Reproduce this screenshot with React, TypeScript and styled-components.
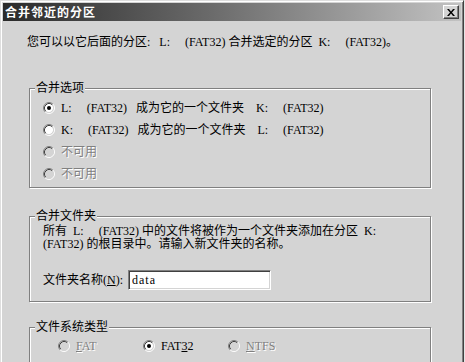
import React from 'react';
import styled, { createGlobalStyle } from 'styled-components';

const GlobalStyle = createGlobalStyle`
  html, body {
    margin: 0;
    padding: 0;
    overflow: hidden;
    background: #e4e4e4;
  }
  body {
    font-family: "Liberation Serif", "Noto Sans CJK SC", serif;
    font-size: 12px;
    color: #000;
  }
`;

const Window = styled.div`
  width: 464px;
  height: 362px;
  box-sizing: border-box;
  background: #d4d4d4;
  border: 1px solid;
  border-bottom: none;
  border-color: #dedede #404040 #404040 #dedede;
  box-shadow: inset 1px 1px 0 #fff, inset -1px 0 0 #808080;
  padding: 2px 2px 0 2px;
  display: flex;
  flex-direction: column;
  overflow: hidden;
`;

const TitleBar = styled.div`
  height: 18px;
  flex: none;
  display: flex;
  align-items: center;
  justify-content: space-between;
  padding: 0 2px;
  background: linear-gradient(to right, #2a2a2a 0%, #6a6a6a 45%, #c2c2c2 100%);
`;

const Title = styled.span`
  color: #fff;
  font-family: "Noto Sans CJK SC", sans-serif;
  font-weight: 700;
  font-size: 12px;
  letter-spacing: 1px;
  line-height: 18px;
`;

const CloseButton = styled.button`
  width: 16px;
  height: 14px;
  padding: 0;
  box-sizing: border-box;
  background: #d4d4d4;
  border: 1px solid;
  border-color: #fff #404040 #404040 #fff;
  box-shadow: inset -1px -1px 0 #808080;
  display: flex;
  align-items: center;
  justify-content: center;
`;

const Content = styled.div`
  padding: 13px 0 0 24px;
  display: flex;
  flex-direction: column;
`;

const Intro = styled.p`
  margin: 0;
  line-height: 16px;
  white-space: pre;
`;

const Group = styled.fieldset<{ $mt: number }>`
  margin: ${(p) => p.$mt}px 0 0 2px;
  width: 402px;
  min-width: 0;
  box-sizing: border-box;
  border: 1px solid #808080;
  box-shadow: 1px 1px 0 #fff, inset 1px 1px 0 #fff;
  padding: 0;
  flex: none;
`;

const Legend = styled.legend`
  margin-left: 5px;
  padding: 0 1px;
  line-height: 16px;
  background: #d4d4d4;
`;

const GroupBody = styled.div<{ $pt: number; $pb: number; $pl: number }>`
  padding: ${(p) => p.$pt}px 0 ${(p) => p.$pb}px ${(p) => p.$pl}px;
  display: flex;
  flex-direction: column;
`;

const OptionRow = styled.div`
  display: flex;
  align-items: center;
  height: 22px;
  gap: 6px;
`;

const OptionLabel = styled.span<{ $disabled?: boolean }>`
  white-space: pre;
  line-height: 16px;
  color: ${(p) => (p.$disabled ? '#808080' : '#000')};
  text-shadow: ${(p) => (p.$disabled ? '1px 1px 0 #fff' : 'none')};
`;

const Paragraph = styled.p`
  margin: 0;
  line-height: 13px;
  white-space: pre;
`;

const FieldRow = styled.div`
  display: flex;
  align-items: center;
  gap: 5px;
  margin-top: 19px;
  height: 20px;
`;

const FieldLabel = styled.label`
  white-space: pre;
  line-height: 16px;
`;

const TextInput = styled.input`
  width: 143px;
  height: 20px;
  box-sizing: border-box;
  margin: 0;
  padding: 0 3px;
  background: #fff;
  border: 1px solid;
  border-color: #808080 #fff #fff #808080;
  box-shadow: inset 1px 1px 0 #404040, inset -1px -1px 0 #d4d4d4;
  font-family: "Liberation Serif", serif;
  font-size: 12px;
  letter-spacing: 1px;
  color: #000;
  outline: none;
`;

const TypeRow = styled.div`
  display: grid;
  grid-template-columns: 85px 85px 85px;
`;

const RadioBox = styled.span`
  display: inline-flex;
  width: 12px;
  height: 12px;
  flex: none;
`;

function Radio({ checked, disabled }: { checked?: boolean; disabled?: boolean }) {
  return (
    <RadioBox>
      <svg width="12" height="12" viewBox="0 0 12 12">
        <circle cx="6" cy="6" r="4.2" fill={disabled ? '#d4d4d4' : '#fff'} />
        <path d="M2.11 9.89 A5.5 5.5 0 0 1 9.89 2.11" fill="none" stroke="#808080" strokeWidth="1" />
        <path d="M9.89 2.11 A5.5 5.5 0 0 1 2.11 9.89" fill="none" stroke="#fff" strokeWidth="1" />
        <path d="M2.82 9.18 A4.5 4.5 0 0 1 9.18 2.82" fill="none" stroke="#404040" strokeWidth="1" />
        <path d="M9.18 2.82 A4.5 4.5 0 0 1 2.82 9.18" fill="none" stroke="#d4d4d4" strokeWidth="1" />
        {checked && <circle cx="6" cy="6" r="2" fill={disabled ? '#808080' : '#000'} />}
      </svg>
    </RadioBox>
  );
}

export default function App() {
  return (
    <>
      <GlobalStyle />
      <Window>
        <TitleBar>
          <Title>合并邻近的分区</Title>
          <CloseButton aria-label="关闭">
            <svg width="8" height="7" viewBox="0 0 8 7">
              <path d="M0 0h2l2 2.4L6 0h2L5 3.5 8 7H6L4 4.6 2 7H0l3-3.5z" fill="#000" />
            </svg>
          </CloseButton>
        </TitleBar>
        <Content>
          <Intro>{'您可以以它后面的分区:   L:     (FAT32) 合并选定的分区  K:     (FAT32)。'}</Intro>

          <Group $mt={30}>
            <Legend>合并选项</Legend>
            <GroupBody $pt={1} $pb={2} $pl={13}>
              <OptionRow>
                <Radio checked />
                <OptionLabel>{'L:     (FAT32)   成为它的一个文件夹    K:     (FAT32)'}</OptionLabel>
              </OptionRow>
              <OptionRow>
                <Radio />
                <OptionLabel>{'K:     (FAT32)   成为它的一个文件夹    L:     (FAT32)'}</OptionLabel>
              </OptionRow>
              <OptionRow>
                <Radio disabled />
                <OptionLabel $disabled>不可用</OptionLabel>
              </OptionRow>
              <OptionRow>
                <Radio disabled />
                <OptionLabel $disabled>不可用</OptionLabel>
              </OptionRow>
            </GroupBody>
          </Group>

          <Group $mt={20}>
            <Legend>合并文件夹</Legend>
            <GroupBody $pt={1} $pb={11} $pl={13}>
              <Paragraph>
                {'所有  L:     (FAT32) 中的文件将被作为一个文件夹添加在分区  K:'}
                <br />
                {'(FAT32) 的根目录中。请输入新文件夹的名称。'}
              </Paragraph>
              <FieldRow>
                <FieldLabel htmlFor="folder-name">
                  文件夹名称(<u>N</u>):
                </FieldLabel>
                <TextInput id="folder-name" defaultValue="data" />
              </FieldRow>
            </GroupBody>
          </Group>

          <Group $mt={17}>
            <Legend>文件系统类型</Legend>
            <GroupBody $pt={0} $pb={10} $pl={28}>
              <TypeRow>
                <OptionRow>
                  <Radio disabled />
                  <OptionLabel $disabled>
                    <u>F</u>AT
                  </OptionLabel>
                </OptionRow>
                <OptionRow>
                  <Radio checked />
                  <OptionLabel>
                    FAT<u>3</u>2
                  </OptionLabel>
                </OptionRow>
                <OptionRow>
                  <Radio disabled />
                  <OptionLabel $disabled>
                    <u>N</u>TFS
                  </OptionLabel>
                </OptionRow>
              </TypeRow>
            </GroupBody>
          </Group>
        </Content>
      </Window>
    </>
  );
}
